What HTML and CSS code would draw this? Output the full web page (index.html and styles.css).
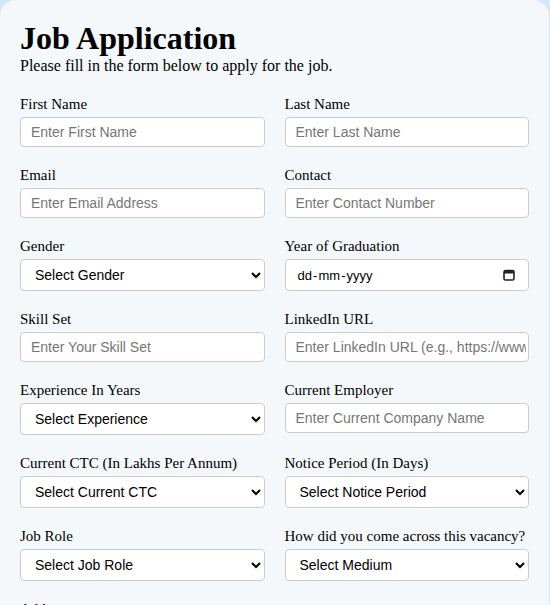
FILE: index.html
```html
<!DOCTYPE html>
<html lang="en">
<head>
<meta charset="utf-8">
<title>Job Application</title>
<link rel="stylesheet" href="styles.css">
</head>
<body>
<div class="card">
  <h1 class="title">Job Application</h1>
  <p class="subtitle">Please fill in the form below to apply for the job.</p>
  <form class="grid">
    <div class="field">
      <label class="label">First Name</label>
      <input class="control" type="text" placeholder="Enter First Name">
    </div>
    <div class="field">
      <label class="label">Last Name</label>
      <input class="control" type="text" placeholder="Enter Last Name">
    </div>
    <div class="field">
      <label class="label">Email</label>
      <input class="control" type="email" placeholder="Enter Email Address">
    </div>
    <div class="field">
      <label class="label">Contact</label>
      <input class="control" type="text" placeholder="Enter Contact Number">
    </div>
    <div class="field">
      <label class="label">Gender</label>
      <select class="control select"><option>Select Gender</option></select>
    </div>
    <div class="field">
      <label class="label">Year of Graduation</label>
      <div class="control date">
        <span class="date-text">dd&#8202;-&#8202;mm&#8202;-&#8202;yyyy</span>
        <svg class="cal" width="12" height="12" viewBox="0 0 12 12"><rect x="1" y="1.5" width="10" height="9.5" rx="1.5" fill="none" stroke="#222" stroke-width="1.6"/><rect x="1" y="1.5" width="10" height="3" fill="#222"/></svg>
      </div>
    </div>
    <div class="field">
      <label class="label">Skill Set</label>
      <input class="control" type="text" placeholder="Enter Your Skill Set">
    </div>
    <div class="field">
      <label class="label">LinkedIn URL</label>
      <input class="control linkedin" type="text" placeholder="Enter LinkedIn URL (e.g., https://www.linkedin.com/in/yourname)">
    </div>
    <div class="field">
      <label class="label">Experience In Years</label>
      <select class="control select"><option>Select Experience</option></select>
    </div>
    <div class="field">
      <label class="label">Current Employer</label>
      <input class="control" type="text" placeholder="Enter Current Company Name">
    </div>
    <div class="field">
      <label class="label">Current CTC (In Lakhs Per Annum)</label>
      <select class="control select"><option>Select Current CTC</option></select>
    </div>
    <div class="field">
      <label class="label">Notice Period (In Days)</label>
      <select class="control select"><option>Select Notice Period</option></select>
    </div>
    <div class="field">
      <label class="label">Job Role</label>
      <select class="control select"><option>Select Job Role</option></select>
    </div>
    <div class="field">
      <label class="label">How did you come across this vacancy?</label>
      <select class="control select"><option>Select Medium</option></select>
    </div>
    <div class="field field-wide">
      <label class="label">Address</label>
      <textarea class="control area" placeholder="Enter Address"></textarea>
    </div>
  </form>
</div>
</body>
</html>
```
FILE: styles.css
```css
html, body {
  margin: 0;
  padding: 0;
}
body {
  background: #cfe9f7;
  font-family: "Liberation Serif", "Times New Roman", serif;
  color: #000;
}
.card {
  width: 549px;
  box-sizing: border-box;
  padding: 20px;
  background: #f4f8fa;
  border-radius: 16px;
}
.title {
  margin: 0;
  font-size: 32px;
  font-weight: bold;
  line-height: 37px;
}
.subtitle {
  margin: 0 0 20px;
  font-size: 16px;
  line-height: 18px;
}
.grid {
  display: grid;
  grid-template-columns: 1fr 1fr;
  column-gap: 20px;
  row-gap: 19px;
}
.field {
  display: flex;
  flex-direction: column;
  min-width: 0;
}
.field-wide {
  grid-column: 1 / -1;
}
.label {
  font-size: 15px;
  line-height: 18px;
  margin-bottom: 4px;
  white-space: nowrap;
}
.control {
  box-sizing: border-box;
  width: 100%;
  height: 30px;
  margin: 0;
  padding: 0 10px;
  border: 1px solid #cccccc;
  border-radius: 4px;
  background: #fff;
  font-family: "Liberation Sans", Arial, sans-serif;
  font-size: 14px;
  color: #000;
  outline: none;
}
.control::placeholder {
  color: #767676;
}
.linkedin {
  padding-right: 2px;
}
.select {
  height: 32px;
  padding: 0 6px 0 10px;
}
.date {
  height: 32px;
  display: flex;
  align-items: center;
  justify-content: space-between;
  padding: 0 13px 0 12px;
}
.date-text {
  font-size: 13px;
  white-space: pre;
}
.cal {
  display: block;
}
.area {
  height: 60px;
  padding: 8px 10px;
  resize: vertical;
}
```
